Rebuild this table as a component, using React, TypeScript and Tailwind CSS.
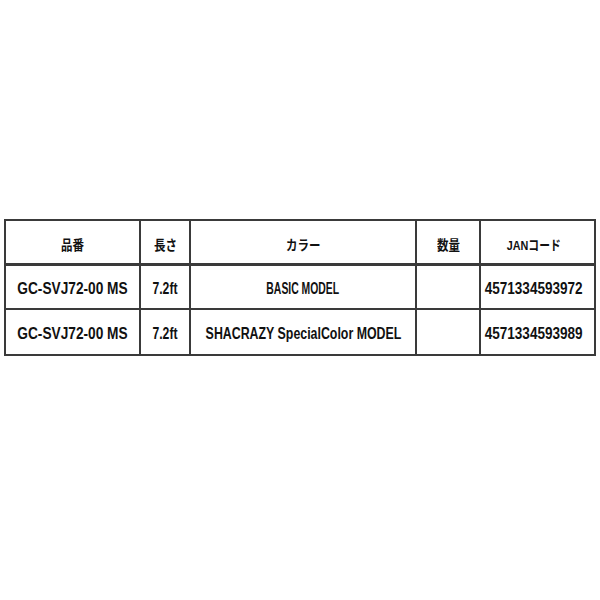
import React from "react";

const cols = ["w-[135px]", "w-[50px]", "w-[226px]", "w-[64px]", "w-[113px] pr-[8px]"];

type Cell = { t: string; s: string };

function Row({ cells, h, border, header }: { cells: Cell[]; h: string; border: string; header?: boolean }) {
  return (
    <div className={`flex ${h} ${border}`}>
      {cells.map((c, i) => (
        <div
          key={i}
          className={`${cols[i]} shrink-0 flex items-center justify-center ${i < 4 ? "border-r-2 border-[#3a3a3a]" : ""} ${header ? "text-[13.5px] pt-[9px]" : "text-[16.5px] pt-[3px]"}`}
        >
          <span className={`inline-block whitespace-nowrap text-[#111] font-bold ${c.s}`}>{c.t}</span>
        </div>
      ))}
    </div>
  );
}

export default function App() {
  return (
    <div
      className="w-[600px] h-[600px] bg-white pt-[219px] pl-[4px]"
      style={{ fontFamily: '"Liberation Sans", "Noto Sans CJK JP", sans-serif' }}
    >
      <div className="w-[592px] border-2 border-[#3a3a3a]">
        <Row
          header
          cells={[
            { t: "品番", s: "scale-x-[0.85]" },
            { t: "長さ", s: "scale-x-[0.85]" },
            { t: "カラー", s: "scale-x-[0.85]" },
            { t: "数量", s: "scale-x-[0.85]" },
            { t: "JANコード", s: "scale-x-[0.8]" },
          ]}
          h="h-[45px]"
          border="border-b-[3px] border-[#3a3a3a]"
        />
        <Row
          cells={[
            { t: "GC-SVJ72-00 MS", s: "scale-x-[0.83]" },
            { t: "7.2ft", s: "scale-x-[0.74]" },
            { t: "BASIC MODEL", s: "scale-x-[0.63]" },
            { t: "", s: "" },
            { t: "4571334593972", s: "scale-x-[0.82]" },
          ]}
          h="h-[44px]"
          border="border-b-2 border-[#3a3a3a]"
        />
        <Row
          cells={[
            { t: "GC-SVJ72-00 MS", s: "scale-x-[0.83]" },
            { t: "7.2ft", s: "scale-x-[0.74]" },
            { t: "SHACRAZY SpecialColor MODEL", s: "scale-x-[0.75]" },
            { t: "", s: "" },
            { t: "4571334593989", s: "scale-x-[0.82]" },
          ]}
          h="h-[44px]"
          border=""
        />
      </div>
    </div>
  );
}
